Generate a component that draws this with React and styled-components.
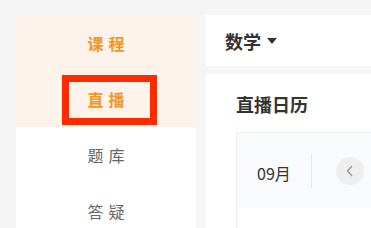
import React from "react";
import styled, { createGlobalStyle } from "styled-components";

const Global = createGlobalStyle`
  html, body {
    margin: 0;
    background: #f5f5f5;
    font-family: "Noto Sans CJK SC", "Noto Sans", sans-serif;
    overflow: hidden;
  }
`;

const Page = styled.div`
  display: flex;
  gap: 10px;
  padding: 15px 0 0 16px;
  height: 228px;
  box-sizing: border-box;
  overflow: hidden;
`;

const Sidebar = styled.nav`
  width: 180px;
  flex-shrink: 0;
  background: #fff;
  overflow: hidden;
`;

const NavItem = styled.div`
  position: relative;
  height: 56px;
  display: flex;
  align-items: center;
  justify-content: center;
  font-size: 16px;
  letter-spacing: 5px;
  padding-left: 5px;
  box-sizing: border-box;
  background: ${(p) => (p.$tint ? "#fdf3ea" : "#fff")};
  color: ${(p) => (p.$tint ? "#f7941d" : "#666")};
  font-weight: ${(p) => (p.$tint ? 700 : 400)};
`;

const Highlight = styled.span`
  position: absolute;
  left: 46px;
  top: 4px;
  width: 95px;
  height: 50px;
  border: 7px solid #ff2a00;
  box-sizing: border-box;
`;

const Main = styled.div`
  flex: 1;
  display: flex;
  flex-direction: column;
  gap: 8px;
  min-width: 0;
  overflow: hidden;
`;

const TopBar = styled.div`
  height: 51px;
  flex-shrink: 0;
  background: #fff;
  display: flex;
  align-items: center;
  padding-left: 19px;
  gap: 6px;
  font-size: 18px;
  font-weight: 700;
  color: #333;
`;

const Caret = styled.span`
  width: 0;
  height: 0;
  border-left: 5px solid transparent;
  border-right: 5px solid transparent;
  border-top: 6px solid #333;
  margin-top: 1px;
`;

const Panel = styled.div`
  flex: 1 0 auto;
  background: #fff;
  padding: 18px 0 0 30px;
`;

const Title = styled.div`
  font-size: 18px;
  font-weight: 700;
  color: #333;
  line-height: 24px;
`;

const Calendar = styled.div`
  margin-top: 16px;
  border: 1px solid #eef0f3;
  border-right: none;
`;

const CalHead = styled.div`
  height: 75px;
  background: #f9fafc;
  display: flex;
  align-items: center;
`;

const Month = styled.div`
  width: 74px;
  text-align: center;
  font-size: 16px;
  color: #333;
  padding-top: 4px;
`;

const Divider = styled.div`
  width: 1px;
  height: 35px;
  background: #e6e8eb;
`;

const RoundBtn = styled.div`
  margin-left: 24px;
  width: 28px;
  height: 28px;
  border-radius: 50%;
  background: #eeeeee;
  display: flex;
  align-items: center;
  justify-content: center;
`;

const CalBody = styled.div`
  height: 40px;
  background: #fff;
`;

export default function App() {
  return (
    <>
      <Global />
      <Page>
        <Sidebar>
          <NavItem $tint>课程</NavItem>
          <NavItem $tint>
            直播
            <Highlight />
          </NavItem>
          <NavItem>题库</NavItem>
          <NavItem>答疑</NavItem>
        </Sidebar>
        <Main>
          <TopBar>
            数学
            <Caret />
          </TopBar>
          <Panel>
            <Title>直播日历</Title>
            <Calendar>
              <CalHead>
                <Month>09月</Month>
                <Divider />
                <RoundBtn>
                  <svg width="10" height="14" viewBox="0 0 10 14">
                    <path d="M7 2 L2.5 7 L7 12" fill="none" stroke="#999" strokeWidth="1.4" />
                  </svg>
                </RoundBtn>
              </CalHead>
              <CalBody />
            </Calendar>
          </Panel>
        </Main>
      </Page>
    </>
  );
}
